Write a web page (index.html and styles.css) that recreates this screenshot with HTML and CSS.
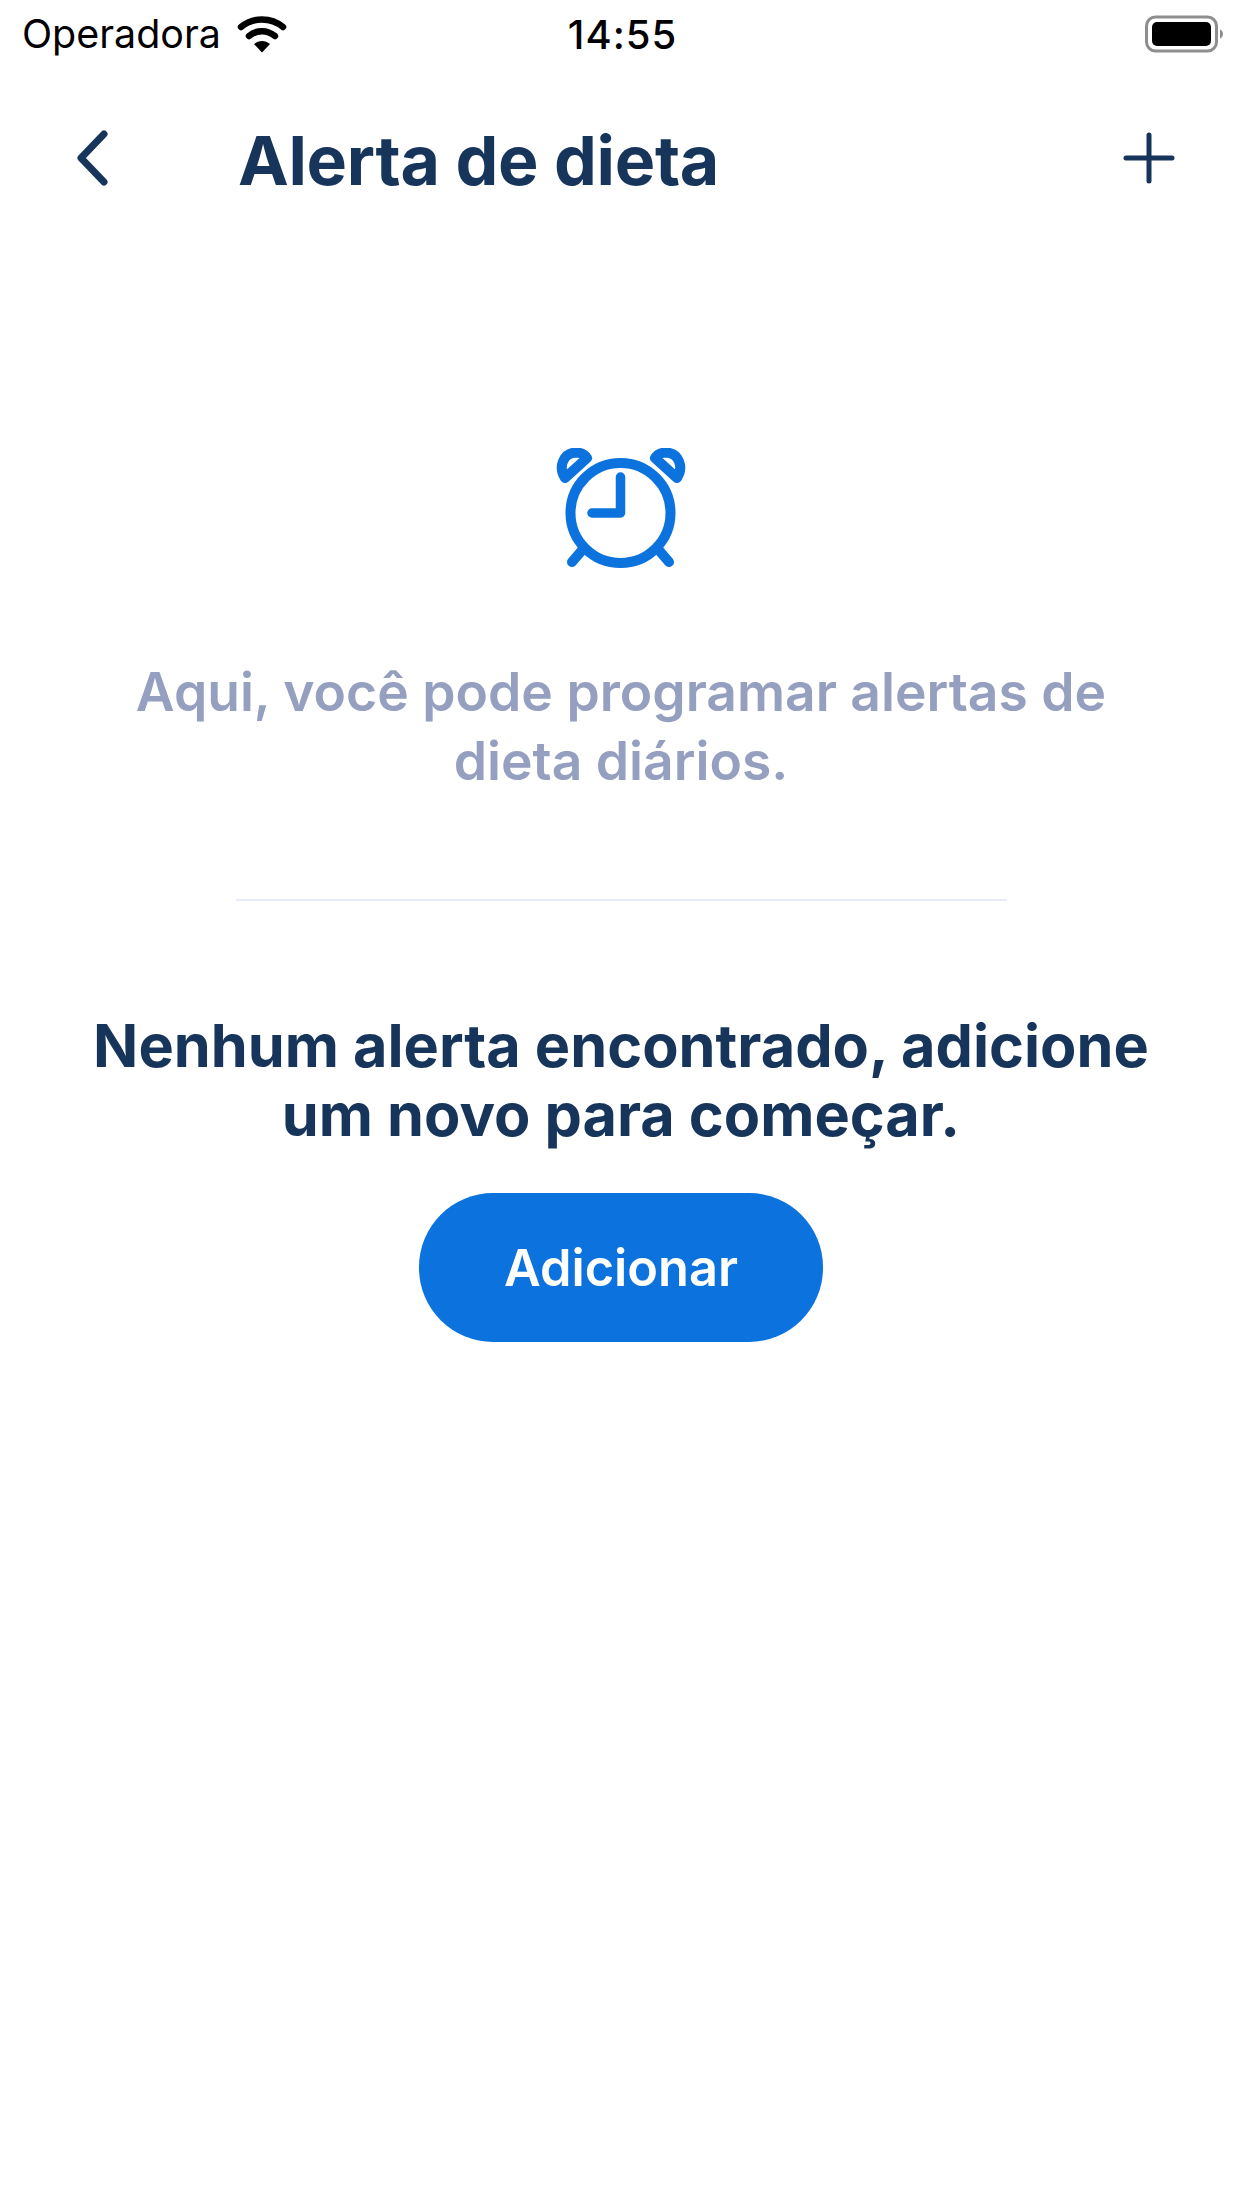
FILE: index.html
```html
<!DOCTYPE html>
<html lang="pt-BR">
<head>
    <meta charset="UTF-8">
    <meta name="viewport" content="width=device-width, initial-scale=1.0">
    <title>Alerta de dieta</title>
    <link rel="stylesheet" href="styles.css">
</head>
<body>
    <div class="status-bar">
        <div class="status-left">
            <span class="carrier">Operadora</span>
            <svg class="wifi" width="50" height="38" viewBox="0 0 50 38">
                <path d="M4 12C16 2 34 2 46 12" fill="none" stroke="#000" stroke-width="6.5" stroke-linecap="round"/>
                <path d="M12 21C20 14.5 30 14.5 38 21" fill="none" stroke="#000" stroke-width="6.5" stroke-linecap="round"/>
                <path d="M17 29C22 25 28 25 33 29L25 37.5Z" fill="#000"/>
            </svg>
        </div>
        <span class="time">14:55</span>
        <svg class="battery" width="78" height="38" viewBox="0 0 78 38">
            <rect x="1.5" y="2" width="70" height="34" rx="9" fill="none" stroke="#8e8e8e" stroke-width="3"/>
            <rect x="7" y="7" width="59" height="24" rx="5" fill="#000"/>
            <path d="M75 14.5C77 15 78 17 78 19C78 21 77 23 75 23.5Z" fill="#8e8e8e"/>
        </svg>
    </div>

    <header class="top-bar">
        <button class="icon-btn back-btn" aria-label="Voltar">
            <svg width="36" height="56" viewBox="0 0 36 56">
                <path d="M30 4L7 28L30 52" fill="none" stroke="#17355a" stroke-width="7" stroke-linecap="round" stroke-linejoin="round"/>
            </svg>
        </button>
        <h1>Alerta de dieta</h1>
        <button class="icon-btn add-btn" aria-label="Adicionar">
            <svg width="52" height="52" viewBox="0 0 52 52">
                <path d="M26 3V49M3 26H49" fill="none" stroke="#17355a" stroke-width="5" stroke-linecap="round"/>
            </svg>
        </button>
    </header>

    <main class="content">
        <svg class="clock" width="130" height="122" viewBox="0 0 130 122">
            <circle cx="64.5" cy="65" r="50" fill="none" stroke="#0c72dd" stroke-width="10"/>
            <path d="M64.5 29V65H36" fill="none" stroke="#0c72dd" stroke-width="9.5" stroke-linecap="round" stroke-linejoin="round"/>
            <path d="M28 100L16 114M101 100L113 114" fill="none" stroke="#0c72dd" stroke-width="10" stroke-linecap="round"/>
            <path d="M9 30C2 19 7 5 20 4.5C25 4.5 29 7 31 10Z" fill="none" stroke="#0c72dd" stroke-width="10" stroke-linejoin="round"/>
            <path d="M121 30C128 19 123 5 110 4.5C105 4.5 101 7 99 10Z" fill="none" stroke="#0c72dd" stroke-width="10" stroke-linejoin="round"/>
        </svg>
        <p class="intro">Aqui, você pode programar alertas de dieta diários.</p>
        <div class="divider"></div>
        <p class="empty">Nenhum alerta encontrado, adicione um novo para começar.</p>
        <button class="add-main">Adicionar</button>
    </main>
</body>
</html>
```

FILE: styles.css
```css
body {
    font-family: Inter, "Liberation Sans", sans-serif;
    background-color: #fff;
    margin: 0;
    width: 1242px;
    height: 2208px;
    overflow: hidden;
}
.status-bar {
    height: 68px;
    display: grid;
    grid-template-columns: 1fr auto 1fr;
    align-items: center;
    padding: 0 19px 0 22px;
    color: #000;
}
.status-left {
    display: flex;
    align-items: center;
    gap: 16px;
}
.carrier {
    font-size: 39.4px;
}
.time {
    font-size: 40px;
    font-weight: 500;
    letter-spacing: 1px;
}
.battery {
    justify-self: end;
}
.top-bar {
    height: 180px;
    display: flex;
    align-items: center;
    padding: 0 67px 0 74px;
}
.icon-btn {
    background: none;
    border: none;
    padding: 0;
    display: flex;
}
.top-bar h1 {
    flex: 1;
    margin: 3px 0 0 128px;
    font-size: 68px;
    font-weight: 700;
    color: #17355a;
    letter-spacing: -0.3px;
}
.content {
    display: flex;
    flex-direction: column;
    align-items: center;
    padding-top: 200px;
}
.clock {
    display: block;
}
.intro {
    margin: 0;
    padding-top: 87px;
    width: 1000px;
    font-size: 53.4px;
    line-height: 69px;
    font-weight: 600;
    text-align: center;
    color: #959fbf;
}
.divider {
    width: 771px;
    height: 2px;
    background: #e9ecf8;
    margin-top: 104px;
}
.empty {
    margin: 0;
    padding-top: 110px;
    width: 1080px;
    font-size: 59.4px;
    line-height: 69px;
    font-weight: 700;
    text-align: center;
    color: #17355a;
}
.add-main {
    width: 404px;
    height: 149px;
    margin-top: 44px;
    border: none;
    border-radius: 74px;
    background: #0c72dd;
    color: white;
    font-family: inherit;
    font-size: 50.5px;
    font-weight: 600;
}
```
